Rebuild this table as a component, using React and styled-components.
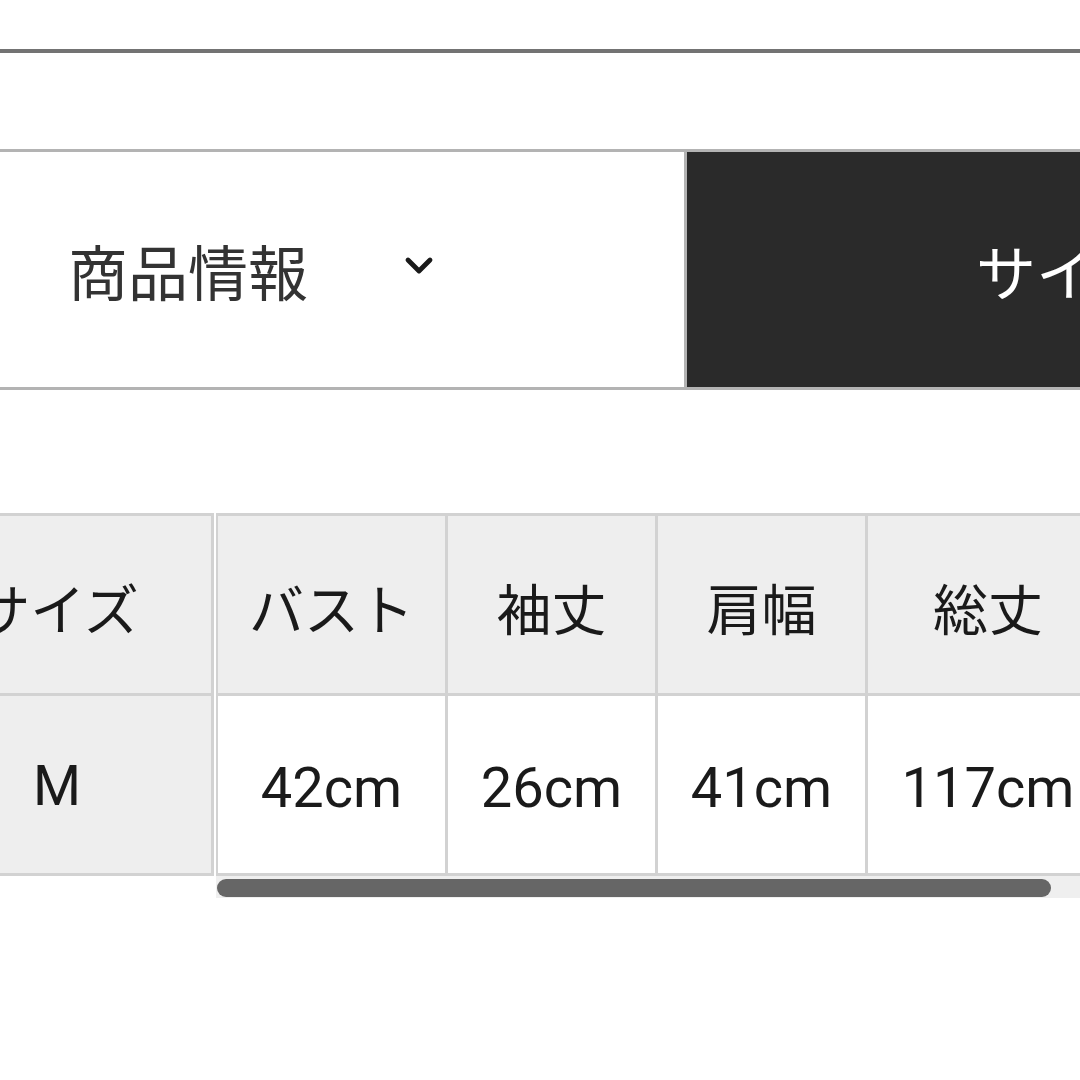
import React from "react";
import styled, { createGlobalStyle } from "styled-components";

const GlobalStyle = createGlobalStyle`
  html, body {
    margin: 0;
    padding: 0;
    background: #ffffff;
  }
  body {
    font-family: "Roboto", "Noto Sans CJK JP", sans-serif;
    overflow: hidden;
  }
`;

const Page = styled.div`
  width: 1080px;
  height: 1080px;
  overflow: hidden;
  background: #fff;
  padding-top: 49px;
  box-sizing: border-box;
`;

const TopRule = styled.div`
  height: 4px;
  background: #737373;
`;

const Tabs = styled.div`
  margin-top: 96px;
  display: flex;
  height: 235px;
  border-top: 3px solid #b3b3b3;
  border-bottom: 3px solid #b3b3b3;
`;

const Tab = styled.div`
  display: flex;
  align-items: center;
  box-sizing: border-box;
  white-space: nowrap;
  overflow: hidden;
  font-family: "Roboto", "Noto Sans CJK JP", sans-serif;
  font-size: 60px;
  font-weight: 400;
  background: ${(p) => (p.$active ? "#2a2a2a" : "#ffffff")};
  color: ${(p) => (p.$active ? "#ffffff" : "#333333")};
  ${(p) =>
    p.$active
      ? `flex: 1; padding-left: 289px;`
      : `width: 687px; padding-left: 68px; border-right: 3px solid #b3b3b3;`}
`;

const Chevron = styled.svg`
  margin-left: 95px;
  margin-top: -8px;
  width: 32px;
  height: 22px;
  flex: none;
`;

const TableWrap = styled.div`
  margin-top: 123px;
  margin-left: -100px;
  display: flex;
  align-items: flex-start;
`;

const Grid = styled.div`
  display: grid;
  grid-template-columns: ${(p) => p.$cols};
  grid-auto-rows: 177px;
  gap: 3px;
  background: #d2d2d2;
  border: 3px solid #d2d2d2;
  border-left-width: ${(p) => (p.$fixed ? "3px" : "2px")};
  flex: none;
`;

const Cell = styled.div`
  display: flex;
  align-items: center;
  justify-content: center;
  white-space: nowrap;
  box-sizing: border-box;
  padding-top: ${(p) => (p.$head ? "2px" : "6px")};
  background: ${(p) => (p.$head ? "#eeeeee" : "#ffffff")};
  color: #1a1a1a;
  font-family: "Roboto", "Noto Sans CJK JP", sans-serif;
  font-size: ${(p) => (p.$head ? "55px" : "56px")};
  font-weight: 400;
`;

const ScrollArea = styled.div`
  margin-left: 2px;
  flex: 1;
  min-width: 0;
  overflow: hidden;
`;

const Track = styled.div`
  height: 22px;
  background: #efefef;
  padding-top: 3px;
  box-sizing: border-box;
`;

const Thumb = styled.div`
  width: 834px;
  height: 18px;
  margin-left: 1px;
  border-radius: 9px;
  background: #666666;
`;

const headers = ["バスト", "袖丈", "肩幅", "総丈"];
const values = ["42cm", "26cm", "41cm", "117cm"];

export default function App() {
  return (
    <Page>
      <GlobalStyle />
      <TopRule />
      <Tabs>
        <Tab>
          商品情報
          <Chevron viewBox="0 0 32 22">
            <path
              d="M5 5 L16 16 L27 5"
              fill="none"
              stroke="#1a1a1a"
              strokeWidth="4.8"
              strokeLinecap="round"
              strokeLinejoin="round"
            />
          </Chevron>
        </Tab>
        <Tab $active>サイズ表</Tab>
      </Tabs>
      <TableWrap>
        <Grid $fixed $cols="308px">
          <Cell $head>サイズ</Cell>
          <Cell $head>M</Cell>
        </Grid>
        <ScrollArea>
          <Grid $cols="227px 207px 207px 240px">
            {headers.map((h) => (
              <Cell $head key={h}>
                {h}
              </Cell>
            ))}
            {values.map((v, i) => (
              <Cell key={i}>{v}</Cell>
            ))}
          </Grid>
          <Track>
            <Thumb />
          </Track>
        </ScrollArea>
      </TableWrap>
    </Page>
  );
}
